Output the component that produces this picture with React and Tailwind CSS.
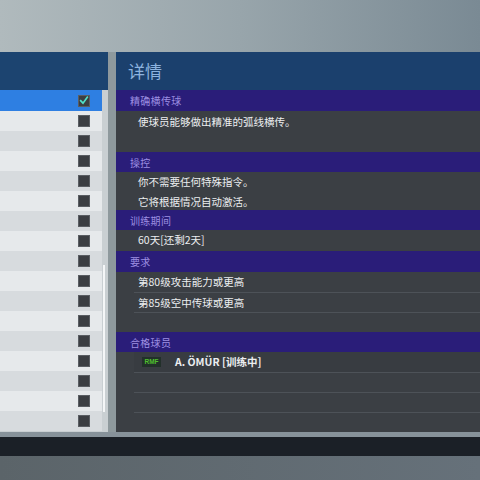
import React from "react";

const cjk = { fontFamily: '"Noto Sans CJK SC", "Noto Sans", sans-serif' };

function Checkbox({ checked }) {
  return (
    <div className="w-[12px] h-[12px] bg-[#3b3e42] border border-[#5a5e63] flex items-center justify-center">
      {checked && (
        <svg width="11" height="11" viewBox="0 0 12 12">
          <path d="M2 6.2 L4.8 9.2 L10 2" fill="none" stroke="#4fe0c8" strokeWidth="2" strokeLinecap="square" />
        </svg>
      )}
    </div>
  );
}

function SectionHead({ children, h = "h-[20px]" }) {
  return (
    <div className={`${h} bg-[#2a1d79] flex items-center pl-[14px] text-[10px] text-[#9d8fe2] tracking-[0.3px]`}>
      {children}
    </div>
  );
}

function Line({ children, sep = false }) {
  return (
    <div className={`h-[20px] ml-[18px] flex items-center pl-[4px] text-[10.5px] text-[#eceef0] ${sep ? "border-t border-[#4d5258]" : ""}`}>
      {children}
    </div>
  );
}

export default function App() {
  const rows = Array.from({ length: 16 }, (_, i) => i);
  return (
    <div className="w-[480px] h-[480px] overflow-hidden flex flex-col bg-[linear-gradient(90deg,#b0babd_0%,#98a5ab_50%,#7a8a94_100%)]" style={cjk}>
      <div className="h-[52px] shrink-0" />
      <div className="h-[380px] shrink-0 flex">
        {/* selection list */}
        <div className="w-[108px] flex flex-col">
          <div className="h-[38px] bg-[#1c4470]" />
          <div className="flex-1 flex bg-[#c9cfd2]">
            <div className="w-[102px] flex flex-col">
              <div className="h-[21px] bg-[#2e7fe2] flex items-center justify-end pr-[12px]">
                <Checkbox checked />
              </div>
              {rows.map((i) => (
                <div
                  key={i}
                  className={`h-[20px] flex items-center justify-end pr-[12px] ${i % 2 === 0 ? "bg-[#e6e9eb]" : "bg-[#d7dbde]"}`}
                >
                  <Checkbox />
                </div>
              ))}
            </div>
            <div className="w-[6px] flex flex-col pt-[175px]">
              <div className="ml-[1px] w-[2px] h-[147px] bg-[#f4f6f7]" />
            </div>
          </div>
        </div>

        <div className="w-[8px] bg-[#8e999d]" />

        {/* details */}
        <div className="flex-1 flex flex-col bg-[#3b3f44]">
          <div className="h-[38px] bg-[#1b406d] flex items-center pl-[12px] text-[17px] text-[#8db3df]">详情</div>
          <SectionHead h="h-[21px]">精确横传球</SectionHead>
          <div className="h-[41px] pt-[1px]">
            <Line>使球员能够做出精准的弧线横传。</Line>
          </div>
          <SectionHead>操控</SectionHead>
          <div className="h-[38px]">
            <Line>你不需要任何特殊指令。</Line>
            <Line>它将根据情况自动激活。</Line>
          </div>
          <SectionHead>训练期间</SectionHead>
          <div className="h-[21px]">
            <Line>60天[还剩2天]</Line>
          </div>
          <SectionHead h="h-[21px]">要求</SectionHead>
          <div className="h-[60px]">
            <Line>第80级攻击能力或更高</Line>
            <Line sep>第85级空中传球或更高</Line>
            <Line sep />
          </div>
          <SectionHead>合格球员</SectionHead>
          <div className="flex-1 flex flex-col">
            <div className="h-[20px] ml-[18px] flex items-center bg-[#383c41]">
              <div className="ml-[8px] w-[19px] h-[10px] bg-[#22302a] flex items-center justify-center text-[6.5px] font-bold text-[#4fbf2e]" style={{ fontFamily: '"Liberation Sans", sans-serif' }}>
                RMF
              </div>
              <div className="ml-[14px] text-[10.5px] font-bold text-[#eceef0]">A. ÖMÜR [训练中]</div>
            </div>
            <Line sep />
            <Line sep />
            <Line sep />
          </div>
        </div>
      </div>
      <div className="h-[5px] shrink-0 bg-[#87929a]" />
      <div className="h-[19px] shrink-0 bg-[#1b2027]" />
      <div className="flex-1 bg-[linear-gradient(90deg,#5b6469_0%,#66717a_100%)]" />
    </div>
  );
}
